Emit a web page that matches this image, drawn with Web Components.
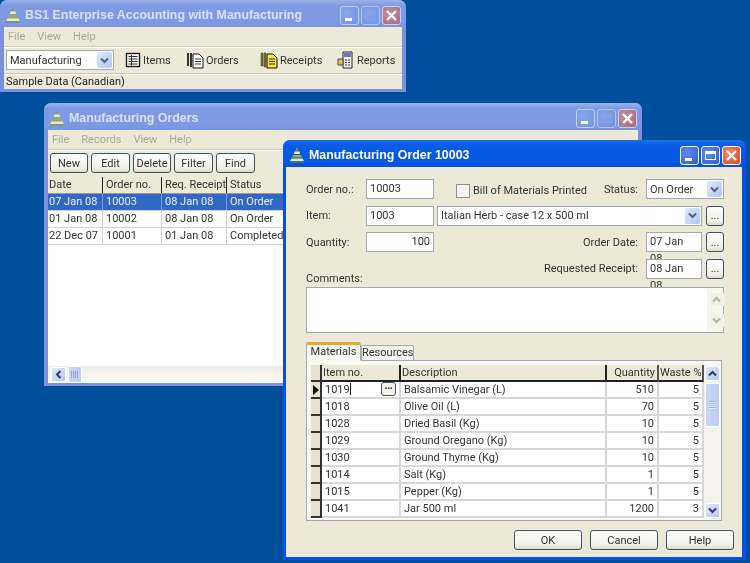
<!DOCTYPE html>
<html>
<head>
<meta charset="utf-8">
<title>BS1 Enterprise</title>
<style>
html, body { margin: 0; height: 100%; overflow: hidden; background: #004f9c; }
body { font: 11px Roboto, sans-serif; color: #222; }
</style>
</head>
<body>
<x-desktop>
  <x-window title="BS1 Enterprise Accounting with Manufacturing" style="left:0;top:0;width:406px;height:92px">
    <x-menubar items="File,View,Help"></x-menubar>
    <x-toolbar></x-toolbar>
    <x-statusline>Sample Data (Canadian)</x-statusline>
  </x-window>
  <x-window title="Manufacturing Orders" style="left:44px;top:103px;width:598px;height:283px">
    <x-menubar items="File,Records,View,Help"></x-menubar>
    <x-orders-list></x-orders-list>
  </x-window>
  <x-window active title="Manufacturing Order 10003" style="left:283px;top:140px;width:463px;height:420px">
    <x-order-form></x-order-form>
  </x-window>
</x-desktop>

<script>
const chevron = (dir, color) => `<svg width="9" height="7" viewBox="0 0 9 7"><path d="${dir === 'up' ? 'M1 5.5 4.5 2 8 5.5' : 'M1 1.5 4.5 5 8 1.5'}" fill="none" stroke="${color}" stroke-width="2"/></svg>`;

const treeIcon = `<svg width="18" height="18" viewBox="0 0 18 18">
<path d="M9 1 10.5 4.5H7.5Z" fill="#8f9c3c"/>
<path d="M6.7 5.5H11.3L12.3 8H5.7Z" fill="#f0f0b0"/>
<path d="M5 9H13L14 11.5H4Z" fill="#9cab45"/>
<path d="M3.5 12.5H14.5L16 15H2Z" fill="#e9ecaa"/>
<path d="M2 15.5H16V16.5H2Z" fill="#76863a"/>
</svg>`;

class XDesktop extends HTMLElement {
  constructor() {
    super();
    this.attachShadow({ mode: 'open' }).innerHTML = `
<style>
:host { display: block; position: relative; width: 750px; height: 563px; overflow: hidden; background: #004f9c; filter: blur(.3px); }
</style>
<slot></slot>`;
  }
}

class XWindow extends HTMLElement {
  constructor() {
    super();
    const active = this.hasAttribute('active');
    this.attachShadow({ mode: 'open' }).innerHTML = `
<style>
:host {
  position: absolute; box-sizing: border-box; display: flex; flex-direction: column;
  padding: 0 4px 3px ${active ? 3 : 4}px; border-radius: 7px 7px 0 0;
  background: ${active ? '#0a50e0' : '#7c90dc'};
}
.title {
  flex: none; height: 27px; box-sizing: border-box; margin: 0 -4px 0 ${active ? -3 : -4}px; padding: 3px 5px 0 ${active ? 5 : 4}px; display: flex; align-items: center; gap: 2px;
  border-radius: 7px 7px 0 0;
  background: ${active ? 'linear-gradient(#1a70ee,#0a5ce6 20%,#0658e0 80%,#0a50d8)' : 'linear-gradient(#9ab2ea,#7f9ae2 20%,#7e9ae4 80%,#7a94dc)'};
  color: ${active ? '#fff' : '#d6e2fa'};
  font: bold 12.4px "Liberation Sans", sans-serif;
}
.title span { flex: 1; padding-left: 1px; }
.btn {
  width: 19px; height: 19px; box-sizing: border-box; border-radius: 3px; border: 1px solid ${active ? '#fff' : '#c4d2f2'};
  background: ${active ? 'radial-gradient(circle at 35% 35%,#5f8cf0,#2c5cd8)' : 'radial-gradient(circle at 35% 35%,#89a7ec,#6f92e2)'};
  display: flex; align-items: center; justify-content: center; position: relative;
}
.btn.close { background: ${active ? 'radial-gradient(circle at 35% 35%,#ea8a6a,#d2482a)' : 'radial-gradient(circle at 35% 35%,#c49098,#a86880)'}; }
.min::after { content: ""; position: absolute; left: 4px; bottom: 3px; width: 7px; height: 3px; background: #fff; }
.max::after { content: ""; width: 11px; height: 9px; box-sizing: border-box; border: 1px solid ${active ? '#fff' : '#8aa6e8'}; border-top-width: 3px; }
.body { flex: 1; min-height: 0; background: #ece9d8; display: flex; flex-direction: column; overflow: hidden; }
</style>
<div class="title">
  ${treeIcon}
  <span>${this.getAttribute('title')}</span>
  <div class="btn min"></div>
  <div class="btn max"${active ? '' : ' style="opacity:.75"'}></div>
  <div class="btn close"><svg width="13" height="13" viewBox="0 0 13 13"><path d="M2 2 11 11M11 2 2 11" stroke="#fff" stroke-width="2.4"/></svg></div>
</div>
<div class="body"><slot></slot></div>`;
    this.removeAttribute('title');
  }
}

class XMenubar extends HTMLElement {
  constructor() {
    super();
    const items = this.getAttribute('items').split(',');
    this.attachShadow({ mode: 'open' }).innerHTML = `
<style>
:host { display: flex; flex: none; height: 20px; align-items: center; gap: 12px; padding: 0 4px; color: #aca899; border-bottom: 1px solid #d0cdbc; box-shadow: 0 1px 0 #fff; box-sizing: border-box; }
</style>
${items.map(i => `<span>${i}</span>`).join('')}`;
  }
}

const toolIcons = {
  items: `<svg width="16" height="16" viewBox="0 0 16 16"><rect x="1.500" y="1.500" width="13" height="13" fill="#fff" stroke="#222" stroke-width="1.400"/><path d="M3.500 4.500H12.500M3.500 7H12.500M3.500 9.500H12.500M3.500 12H12.500M6.500 3V13.500" stroke="#333"/></svg>`,
  orders: `<svg width="18" height="17" viewBox="0 0 18 17"><path d="M1 1H3V14H1ZM4 1H6V15H4Z" fill="#333"/><path d="M7 2H13L17 6V16H7Z" fill="#fff" stroke="#111"/><path d="M9 7H15M9 9.500H15M9 12H15" stroke="#333"/></svg>`,
  receipts: `<svg width="18" height="17" viewBox="0 0 18 17"><path d="M1 1H3V14H1ZM4 1H6V15H4Z" fill="#7c7a1a" stroke="#333" stroke-width=".5"/><path d="M7 2H13L17 6V16H7Z" fill="#f2e640" stroke="#111"/><path d="M9 7H15M9 9.500H15M9 12H15" stroke="#333"/></svg>`,
  reports: `<svg width="18" height="18" viewBox="0 0 18 18"><path d="M6 1H15V17H6Z" fill="#f4f4f4" stroke="#222"/><path d="M7 2H14V6H7Z" fill="#6a74b8"/><path d="M8 9H14M8 11.500H14M8 14H14" stroke="#333" stroke-dasharray="2 1"/><path d="M1 8H6V14H1Z" fill="#d8c840" stroke="#445"/></svg>`
};

class XToolbar extends HTMLElement {
  constructor() {
    super();
    const tools = [['Items', 'items', 61], ['Orders', 'orders', 74], ['Receipts', 'receipts', 77], ['Reports', 'reports', 60]];
    this.attachShadow({ mode: 'open' }).innerHTML = `
<style>
:host { display: flex; flex: none; height: 27px; align-items: center; padding-left: 2px; box-sizing: border-box; border-bottom: 1px solid #c8c5b4; box-shadow: 0 1px 0 #fff; }
x-combo { margin-right: 11px; }
.tool { display: flex; align-items: center; gap: 2px; color: #333; }
</style>
<x-combo w="108" h="20">Manufacturing</x-combo>
${tools.map(t => `<div class="tool" style="width:${t[2]}px">${toolIcons[t[1]]}<span>${t[0]}</span></div>`).join('')}`;
  }
}

class XStatusline extends HTMLElement {
  constructor() {
    super();
    this.attachShadow({ mode: 'open' }).innerHTML = `
<style>
:host { display: flex; flex: 1; align-items: center; padding: 0 2px; }
</style>
<slot></slot>`;
  }
}

class XCombo extends HTMLElement {
  constructor() {
    super();
    const w = this.getAttribute('w'), h = this.getAttribute('h') || 20;
    this.attachShadow({ mode: 'open' }).innerHTML = `
<style>
:host { display: flex; flex: none; box-sizing: border-box; width: ${w}px; height: ${h}px; align-items: center; background: #fff; border: 1px solid #a0abb0; padding: 0 1px 0 3px; }
.t { flex: 1; color: #333; white-space: nowrap; overflow: hidden; }
.a { width: 15px; height: 16px; border-radius: 2px; background: linear-gradient(135deg,#dfe8fb,#b4c6f2); display: flex; align-items: center; justify-content: center; }
</style>
<div class="t"><slot></slot></div>
<div class="a">${chevron('down', '#4d6185')}</div>`;
  }
}

class XField extends HTMLElement {
  constructor() {
    super();
    const w = this.getAttribute('w');
    this.attachShadow({ mode: 'open' }).innerHTML = `
<style>
:host { display: block; flex: none; box-sizing: border-box; width: ${w}px; height: 20px; line-height: 17px; background: #fff; border: 1px solid #a0abb0; padding: 0 3px; color: #333; }
:host([right]) { text-align: right; }
</style>
<slot></slot>`;
  }
}

class XButton extends HTMLElement {
  constructor() {
    super();
    const w = this.getAttribute('w');
    this.attachShadow({ mode: 'open' }).innerHTML = `
<style>
:host { display: flex; flex: none; box-sizing: border-box; width: ${w}px; height: 20px; align-items: center; justify-content: center; border: 1px solid #3c5668; border-radius: 3px; background: linear-gradient(#fdfdfb,#f0efe6 80%,#dcd8c8); color: #333; }
</style>
<slot></slot>`;
  }
}

class XScrollbar extends HTMLElement {
  constructor() {
    super();
    const mode = this.getAttribute('mode');
    let inner = '';
    let host = '';
    if (mode === 'h') {
      host = 'flex-direction: row; height: 17px; padding-left: 2px; background: linear-gradient(#f0efe6,#fbfbf7);';
      inner = `<div class="a l"><svg width="7" height="9" viewBox="0 0 7 9"><path d="M5.500 1 2 4.500 5.500 8" fill="none" stroke="#333f60" stroke-width="2"/></svg></div><div class="th" style="width:14px"><i class="hg"></i></div>`;
    } else if (mode === 'off') {
      host = 'flex-direction: column; width: 16px; justify-content: space-between; background: #f6f5ee; padding: 3px 1px;';
      inner = `<div class="a off">${chevron('up', '#b4b4a8')}</div><div class="a off">${chevron('down', '#b4b4a8')}</div>`;
    } else {
      host = 'flex-direction: column; width: 17px; background: #f4f3ec;';
      inner = `<div class="a">${chevron('up', '#333f60')}</div><div class="th" style="height:44px;margin-top:1px"><i class="vg"></i></div><div style="flex:1"></div><div class="a">${chevron('down', '#333f60')}</div>`;
    }
    this.attachShadow({ mode: 'open' }).innerHTML = `
<style>
:host { display: flex; flex: none; box-sizing: border-box; ${host} }
.a { flex: none; width: 15px; height: 15px; margin: 1px; border-radius: 2px; background: linear-gradient(135deg,#e2eafc,#b4c8f4); border: 1px solid #fff; box-sizing: border-box; display: flex; align-items: center; justify-content: center; }
.a.off { background: #f2f1e8; border-color: #f8f8f2; }
.th { flex: none; width: 15px; margin: 0 1px; box-sizing: border-box; border: 1px solid #fff; border-radius: 2px; background: linear-gradient(90deg,#c8d6f8,#bccef4); display: flex; align-items: center; justify-content: center; }
.hg { width: 8px; height: 7px; background: repeating-linear-gradient(90deg,#8ea6dc 0 1px,transparent 1px 2px); }
.vg { width: 7px; height: 8px; background: repeating-linear-gradient(#9cb4e4 0 1px,#e8effc 1px 2px); }
</style>
${inner}`;
  }
}

class XOrdersList extends HTMLElement {
  constructor() {
    super();
    const rows = [
      ['07 Jan 08', '10003', '08 Jan 08', 'On Order'],
      ['01 Jan 08', '10002', '08 Jan 08', 'On Order'],
      ['22 Dec 07', '10001', '01 Jan 08', 'Completed']
    ];
    this.attachShadow({ mode: 'open' }).innerHTML = `
<style>
:host { display: flex; flex-direction: column; flex: 1; min-height: 0; }
.bar { display: flex; flex: none; gap: 3px; padding: 3px 0 0 2px; height: 27px; box-sizing: border-box; }
.list { flex: 1; min-height: 0; background: #fff; }
.row { display: grid; grid-template-columns: 55px 59px 65px 1fr; height: 17px; line-height: 16px; box-sizing: border-box; border-bottom: 1px solid #d4d2c8; color: #333; }
.row span { padding-left: 3px; border-right: 1px solid #d4d2c8; white-space: nowrap; }
.row span:first-child { padding-left: 1px; }
.head { background: #ece9d8; border-bottom: 1px solid #999; }
.head span { border-right: 1px solid #222; }
.sel { background: #3168c4; color: #e8f0ff; }
.sel span { border-right-color: #7d9dd8; }
</style>
<div class="bar">
  <x-button w="38">New</x-button><x-button w="39">Edit</x-button><x-button w="38">Delete</x-button><x-button w="39">Filter</x-button><x-button w="39">Find</x-button>
</div>
<div class="list">
  <div class="row head"><span>Date</span><span>Order no.</span><span>Req. Receipt</span><span>Status</span></div>
  ${rows.map((r, i) => `<div class="row${i === 0 ? ' sel' : ''}">${r.map(c => `<span>${c}</span>`).join('')}</div>`).join('')}
</div>
<x-scrollbar mode="h"></x-scrollbar>`;
  }
}

class XOrderForm extends HTMLElement {
  constructor() {
    super();
    this.attachShadow({ mode: 'open' }).innerHTML = `
<style>
:host { display: flex; flex-direction: column; flex: 1; padding: 12px 18px 0 20px; color: #333; min-height: 0; }
.row { display: flex; align-items: center; height: 20px; margin-bottom: 6.500px; }
.lbl { flex: none; width: 60px; }
.rlbl { margin-left: auto; margin-right: 8px; }
.more { margin-left: 4px; }
.check { display: flex; align-items: center; gap: 1px; margin-left: 22px; margin-top: 3px; }
.box { width: 12px; height: 12px; border: 1px solid #8a9298; background: #f4f3ec; margin-right: 2px; }
.comments { align-self: flex-end; line-height: 12px; margin-bottom: -6px; }
.area { display: flex; justify-content: flex-end; height: 46px; margin: 2px 0 9px; box-sizing: border-box; background: #fff; border: 1px solid #a0abb0; }
.foot { display: flex; gap: 8px; justify-content: flex-end; margin: 9px -10px 0 0; }
</style>
<div class="row"><span class="lbl">Order no.:</span><x-field w="68">10003</x-field>
  <div class="check"><div class="box"></div>Bill of Materials Printed</div>
  <span class="rlbl">Status:</span><x-combo w="78">On Order</x-combo></div>
<div class="row"><span class="lbl">Item:</span><x-field w="68">1003</x-field><x-combo w="265" style="margin-left:3px">Italian Herb - case 12 x 500 ml</x-combo><x-button class="more" w="18">...</x-button></div>
<div class="row"><span class="lbl">Quantity:</span><x-field w="68" right>100</x-field><span class="rlbl">Order Date:</span><x-field w="56">07 Jan 08</x-field><x-button class="more" w="18">...</x-button></div>
<div class="row"><span class="comments">Comments:</span><span class="rlbl">Requested Receipt:</span><x-field w="56">08 Jan 08</x-field><x-button class="more" w="18">...</x-button></div>
<div class="area"><x-scrollbar mode="off"></x-scrollbar></div>
<x-tab-panel><x-materials-grid></x-materials-grid></x-tab-panel>
<div class="foot"><x-button w="68">OK</x-button><x-button w="68">Cancel</x-button><x-button w="68">Help</x-button></div>`;
  }
}

class XTabPanel extends HTMLElement {
  constructor() {
    super();
    this.attachShadow({ mode: 'open' }).innerHTML = `
<style>
:host { display: block; flex: none; margin-right: 2px; }
.tabs { display: flex; align-items: flex-end; height: 18px; }
.tab { box-sizing: border-box; height: 15px; width: 53px; text-align: center; line-height: 14px; border: 1px solid #a0abb0; border-bottom: 0; border-radius: 2px 2px 0 0; background: #f6f5ee; }
.tab.on { height: 19px; width: 55px; margin-bottom: -1px; background: #f8f8f4; border-top: 3px solid #e8a838; position: relative; z-index: 1; line-height: 13px; border-bottom: 1px solid #f8f8f4; }
.page { box-sizing: border-box; height: 161px; padding: 4px 1px 1px 4px; background: #f8f8f4; border: 1px solid #a0abb0; }
</style>
<div class="tabs"><div class="tab on">Materials</div><div class="tab">Resources</div></div>
<div class="page"><slot></slot></div>`;
  }
}

class XMaterialsGrid extends HTMLElement {
  constructor() {
    super();
    const rows = [
      ['1019', 'Balsamic Vinegar (L)', '510', '5'],
      ['1018', 'Olive Oil (L)', '70', '5'],
      ['1028', 'Dried Basil (Kg)', '10', '5'],
      ['1029', 'Ground Oregano (Kg)', '10', '5'],
      ['1030', 'Ground Thyme (Kg)', '10', '5'],
      ['1014', 'Salt (Kg)', '1', '5'],
      ['1015', 'Pepper (Kg)', '1', '5'],
      ['1041', 'Jar 500 ml', '1200', '3']
    ];
    this.attachShadow({ mode: 'open' }).innerHTML = `
<style>
:host { display: flex; height: 154px; overflow: hidden; color: #333; }
.cols { width: 393px; flex: none; background: #fff; }
.row { display: grid; grid-template-columns: 11px 79px 206px 52px 45px; height: 17px; line-height: 15px; }
.row > * { padding: 0 3px; box-sizing: border-box; border-right: 2px solid #d8d8d4; border-bottom: 2px solid #d8d8d4; white-space: nowrap; position: relative; }
.row .n { text-align: right; }
.row .ind { padding: 0; background: #e6e3d2; border-right: 2px solid #333; border-bottom: 2px solid #333; display: flex; align-items: center; justify-content: center; }
.head > * { background: #ece9d8; border-right: 2px solid #222; border-bottom: 2px solid #222; padding-left: 1px; }
.head .n { padding-right: 2px; border-right-color: #555; }
.head .ind { background: #e6e3d2; }
.dots { position: absolute; right: 3px; top: 0; width: 15px; height: 14px; box-sizing: border-box; border: 1px solid #3c5668; border-radius: 3px; background: #f4f3ec; line-height: 6px; text-align: center; font-weight: bold; letter-spacing: -.5px; }
.caret { display: inline-block; width: 1px; height: 12px; background: #222; vertical-align: -2px; }
</style>
<div class="cols">
  <div class="row head"><span class="ind"></span><span>Item no.</span><span>Description</span><span class="n">Quantity</span><span class="n">Waste %</span></div>
  ${rows.map((r, i) => `<div class="row"><span class="ind">${i === 0 ? '<svg width="6" height="10" viewBox="0 0 6 10"><path d="M0 0 6 5 0 10Z" fill="#111"/></svg>' : ''}</span><span>${r[0]}${i === 0 ? '<i class="caret"></i><b class="dots">...</b>' : ''}</span><span>${r[1]}</span><span class="n">${r[2]}</span><span class="n">${r[3]}</span></div>`).join('')}
</div>
<x-scrollbar mode="v"></x-scrollbar>`;
  }
}

customElements.define('x-desktop', XDesktop);
customElements.define('x-window', XWindow);
customElements.define('x-menubar', XMenubar);
customElements.define('x-toolbar', XToolbar);
customElements.define('x-statusline', XStatusline);
customElements.define('x-combo', XCombo);
customElements.define('x-field', XField);
customElements.define('x-button', XButton);
customElements.define('x-scrollbar', XScrollbar);
customElements.define('x-orders-list', XOrdersList);
customElements.define('x-order-form', XOrderForm);
customElements.define('x-tab-panel', XTabPanel);
customElements.define('x-materials-grid', XMaterialsGrid);
</script>
</body>
</html>
